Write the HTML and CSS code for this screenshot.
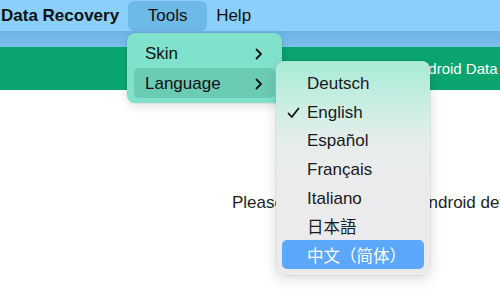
FILE: index.html
```html
<!DOCTYPE html>
<html>
<head>
<meta charset="utf-8">
<link rel="stylesheet" href="styles.css">
</head>
<body>
<div class="screen">
  <div class="menubar">
    <span class="app">Data Recovery</span>
    <span class="mitem active">Tools</span>
    <span class="mitem">Help</span>
  </div>
  <div class="strip"></div>
  <div class="greenbar"><span>Android Data Recovery</span></div>
  <div class="content">
    <p class="msg">Please connect your old Android device</p>
  </div>

  <div class="menu tools">
    <div class="row"><span>Skin</span><svg class="chev" width="8" height="12" viewBox="0 0 8 12"><path d="M1.5 1.5 L6 6 L1.5 10.5" fill="none" stroke="#111" stroke-width="1.8" stroke-linecap="round" stroke-linejoin="round"/></svg></div>
    <div class="row sel"><span>Language</span><svg class="chev" width="8" height="12" viewBox="0 0 8 12"><path d="M1.5 1.5 L6 6 L1.5 10.5" fill="none" stroke="#111" stroke-width="1.8" stroke-linecap="round" stroke-linejoin="round"/></svg></div>
  </div>

  <div class="menu lang">
    <div class="lrow">Deutsch</div>
    <div class="lrow"><svg class="check" width="13" height="12" viewBox="0 0 13 12"><path d="M1.5 6.5 L4.8 10 L11.5 1.5" fill="none" stroke="#111" stroke-width="1.8" stroke-linecap="round" stroke-linejoin="round"/></svg>English</div>
    <div class="lrow">Español</div>
    <div class="lrow">Français</div>
    <div class="lrow">Italiano</div>
    <div class="lrow cjk">日本語</div>
    <div class="lrow cjk hl">中文（简体）</div>
  </div>
</div>
</body>
</html>
```

FILE: styles.css
```css
* { box-sizing: border-box; }
html, body { margin: 0; padding: 0; }
body {
  width: 500px;
  height: 290px;
  overflow: hidden;
  background: #ffffff;
  font-family: "Liberation Sans", "Noto Sans CJK SC", Arial, sans-serif;
  color: #1a1a1a;
}
.screen {
  position: relative;
  width: 500px;
  height: 290px;
  overflow: hidden;
}
.menubar {
  height: 31px;
  background: #8ad0fb;
  display: flex;
  align-items: center;
  font-size: 17px;
  color: #111;
}
.app {
  font-weight: bold;
  padding-left: 1px;
  margin-right: 9px;
}
.mitem {
  height: 30px;
  display: flex;
  align-items: center;
  justify-content: center;
  padding: 0 9px;
}
.mitem.active {
  width: 79px;
  background: #6db9e8;
  border-radius: 6px;
}
.strip {
  height: 16px;
  background: linear-gradient(180deg, #6fb3e6 0%, #74b9ea 60%, #80c0ec 100%);
}
.greenbar {
  height: 43px;
  background: #0aa56f;
  color: #ffffff;
  font-size: 15px;
  display: flex;
  align-items: center;
  padding-left: 410px;
  white-space: nowrap;
  overflow: hidden;
}
.content {
  height: 200px;
  padding-top: 103px;
  padding-left: 232px;
  white-space: nowrap;
}
.msg {
  margin: 0;
  font-size: 17px;
  color: #1e1e1e;
}
.menu {
  position: absolute;
  border-radius: 8px;
}
.tools {
  left: 127px;
  top: 33px;
  width: 155px;
  height: 70px;
  padding: 5px 7px;
  background: #80e2cd;
  box-shadow: 0 3px 10px rgba(0,0,0,0.12), 0 0 0 0.5px rgba(0,0,0,0.08);
  font-size: 17px;
  color: #111;
}
.row {
  height: 30px;
  display: flex;
  align-items: center;
  justify-content: space-between;
  padding: 2px 12px 0 11px;
  border-radius: 5px;
}
.row.sel { background: #6ccbb5; }
.lang {
  left: 276px;
  top: 61px;
  width: 154px;
  height: 214px;
  padding: 7px 6px 6px;
  background: linear-gradient(180deg, #a7ebd7 0%, #cdeee5 22%, #e6eded 38%, #ebebed 55%, #ebebed 100%);
  box-shadow: 0 4px 14px rgba(0,0,0,0.14), 0 0 0 0.5px rgba(0,0,0,0.12);
  font-size: 17px;
  color: #1a1a1a;
}
.lrow {
  position: relative;
  height: 28.7px;
  display: flex;
  align-items: center;
  padding: 3px 0 0 25px;
  border-radius: 5px;
}
.lrow.cjk {
  font-size: 16.5px;
  padding-top: 1px;
}
.check {
  position: absolute;
  left: 5px;
  top: 10px;
}
.lrow.hl {
  background: #5ba7fb;
  color: #ffffff;
}
```
